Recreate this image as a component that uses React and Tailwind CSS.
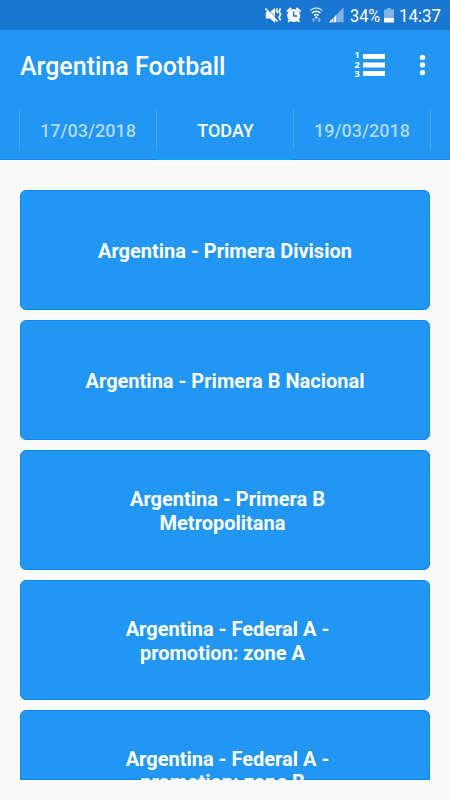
import clsx from "clsx";

const leagues = [
  ["Argentina - Primera Division"],
  ["Argentina - Primera B Nacional"],
  ["Argentina - Primera B", "Metropolitana"],
  ["Argentina - Federal A -", "promotion: zone A"],
  ["Argentina - Federal A -", "promotion: zone B"],
];

const StatusIcons = () => (
  <svg className="h-[30px] w-[82px]" viewBox="0 0 82 30" fill="#fff">
    {/* Muted, vibrating speaker */}
    <path d="M0.8 12h4.200l5-4v14.800l-5-4.300H0.800z" />
    <path d="M0.500 8.500L12.500 21.500" stroke="#fff" strokeWidth="1.800" />
    <path d="M2 8L13.500 20.500" stroke="#1976d2" strokeWidth="0.700" />
    <path
      d="M12.500 8.500l-1.200 2 1.500 2.500M15.600 8.500l-1.500 2.800 1.500 3-1.500 3 1.500 3.200"
      fill="none"
      stroke="#fff"
      strokeWidth="1.600"
    />
    {/* Alarm */}
    <circle cx="28.700" cy="15.500" r="6.500" />
    <path
      d="M22.500 11l3-2.400M35 11l-3-2.400M25 20l-1.300 1.300M32.500 20l1.300 1.300"
      stroke="#fff"
      strokeWidth="2"
      strokeLinecap="round"
    />
    <path
      d="M28.700 11.500v4.500h3.500"
      fill="none"
      stroke="#1976d2"
      strokeWidth="1.400"
    />
    {/* Wifi */}
    <g fill="none" stroke="#fff" strokeWidth="1.400">
      <path d="M45.300 10.500q6-5 12 0" opacity="0.75" />
      <path d="M47.100 13q4.200-3.600 8.400 0" />
      <path d="M49 15.400q2.300-2 4.600 0" />
    </g>
    <circle cx="51.300" cy="17.400" r="1.200" />
    <path
      d="M46.600 20.300l2.100-2.500 2.100 2.500h-1.300v1.800h-1.600v-1.800zM52 19.700l2.100 2.500 2.100-2.500h-1.300v-1.800h-1.600v1.800z"
      opacity="0.45"
    />
    {/* Signal */}
    <path d="M78.600 7.500v14.800H64z" opacity="0.45" />
    <path d="M71 15.200v7.100h-7z" />
    <path d="M68.300 15v8" stroke="#1976d2" strokeWidth="0.700" />
  </svg>
);

const StatusBar = () => (
  <div className="flex h-[30px] items-center bg-[#1976d2] pl-[265px] text-white">
    <StatusIcons />
    <span className="ml-[3px] w-[31px] origin-left scale-x-[0.86] whitespace-nowrap pt-[2px] text-[19px] leading-[30px]">
      34%
    </span>
    <svg className="ml-[3px] h-[30px] w-[10px]" viewBox="0 0 10 30" fill="#fff">
      <path d="M3 8h4v1.500h3V18H0V9.500h3z" opacity="0.45" />
      <path d="M0 18h10v4.500H0z" />
    </svg>
    <span className="ml-[5px] origin-left scale-x-[0.89] pt-[2px] text-[19px] leading-[30px]">
      14:37
    </span>
  </div>
);

const Header = () => (
  <div className="flex h-[70px] items-center bg-[#2196f3] pl-5 text-white">
    <h1 className="w-[334px] pt-[3px] text-[25px] font-medium leading-[30px]">
      Argentina Football
    </h1>
    <button className="flex items-center gap-[3px]">
      <span className="-mt-px flex w-[6px] flex-col text-[9px] font-bold leading-[9.500px] [font-family:'Open_Sans',sans-serif]">
        <span>1</span>
        <span>2</span>
        <span>3</span>
      </span>
      <svg className="h-[22px] w-[22px]" viewBox="0 0 22 22" fill="#fff">
        <path d="M0 0h22v5H0zM0 8.500h22v5H0zM0 17h22v5H0z" />
      </svg>
    </button>
    <button className="ml-[34px]">
      <svg className="h-[22px] w-[7px]" viewBox="0 0 7 22" fill="#fff">
        <circle cx="3.500" cy="3.400" r="2.700" />
        <circle cx="3.500" cy="11" r="2.700" />
        <circle cx="3.500" cy="18.600" r="2.700" />
      </svg>
    </button>
  </div>
);

const Tabs = () => (
  <div className="flex h-[60px] bg-[#2196f3] text-center text-[18px] font-medium">
    <div className="flex w-[156px] items-center border-b border-[#0c85ee]">
      <div className="ml-[19px] h-10 flex-1 border-l border-[#44a6f5] leading-[42px] text-[#b1dafb]">
        17/03/2018
      </div>
    </div>
    <div className="flex w-[137px] items-center border-b-2 border-[#03a9f4]">
      <div className="mt-[1px] h-10 flex-1 border-l border-[#44a6f5] pl-px leading-[42px] text-white">
        TODAY
      </div>
    </div>
    <div className="flex flex-1 items-center border-b border-[#0c85ee]">
      <div className="mr-[19px] h-10 flex-1 border-x border-[#44a6f5] leading-[42px] text-[#b1dafb]">
        19/03/2018
      </div>
    </div>
  </div>
);

const LeagueCard = ({ lines, cut }) => (
  <button
    className={clsx(
      "flex shrink-0 flex-col items-center border border-[#0c85ee] bg-[#2196f3] text-[20px] font-bold text-white",
      cut
        ? "h-[70px] justify-start rounded-t-[6px] pt-[36.5px] leading-[23.5px]"
        : "h-[120px] justify-center rounded-[6px] pt-px leading-[24px]"
    )}
  >
    {lines.map((line, i) => (
      <span
        key={line}
        className={lines.length === 1 ? "" : i === 0 ? "pl-[5px]" : "pr-[5px]"}
      >
        {line}
      </span>
    ))}
  </button>
);

const App = () => {
  return (
    <div className="flex h-[800px] w-[450px] flex-col overflow-hidden bg-[#fafafa] font-['Roboto',sans-serif]">
      <StatusBar />
      <Header />
      <Tabs />
      <div className="mx-5 mt-[30px] flex h-[590px] flex-col gap-[10px] overflow-hidden">
        {leagues.map((lines, i) => (
          <LeagueCard
            key={lines.join(" ")}
            lines={lines}
            cut={i === leagues.length - 1}
          />
        ))}
      </div>
    </div>
  );
};

export default App;
